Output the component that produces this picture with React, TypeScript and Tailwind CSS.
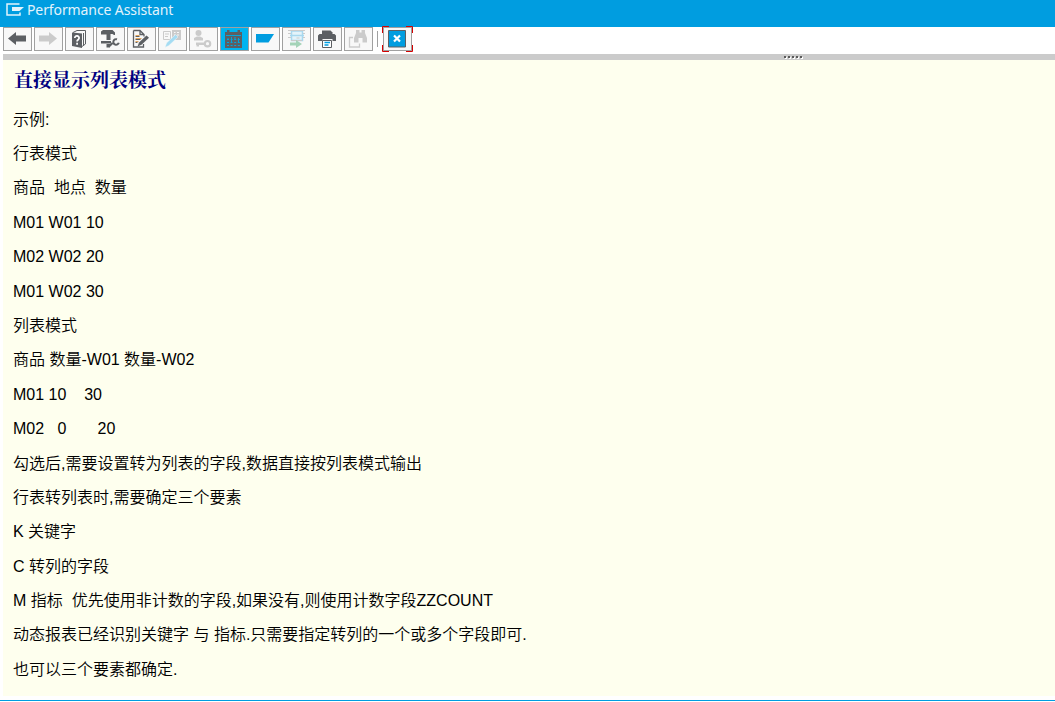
import React, { FC, ReactNode } from 'react'
import clsx from 'clsx'

const DARK = '#5c5f63'
const PALE = '#cbcbcb'

const ToolButton: FC<{ label: string; active?: boolean; children: ReactNode }> = ({
  label,
  active,
  children,
}) => (
  <button
    aria-label={label}
    className={clsx(
      'h-6 w-[29px] shrink-0 border border-[#a0a0a0]',
      active ? 'bg-[#00b4f0]' : 'bg-[#f8f8f8]'
    )}
  >
    <svg viewBox="1 1 27 22" width="27" height="22" className="block">
      {children}
    </svg>
  </button>
)

const TOOLS: { label: string; active?: boolean; icon: ReactNode }[] = [
  {
    label: 'Back',
    icon: <path d="M5 11.5 13 5v3.500h10v6H13V18z" fill={DARK} />,
  },
  {
    label: 'Forward',
    icon: <path d="M23 11.500 15 5v3.500H5v6h10V18z" fill={PALE} />,
  },
  {
    label: 'Application help',
    icon: (
      <>
        <path d="M8 5.500 12 3.500h8.500V17L17 19.500" fill="#f8f8f8" stroke={DARK} />
        <path d="M18.500 6v13" fill="none" stroke={DARK} />
        <path d="M7 5.500 17 6.500V21L7 19z" fill={DARK} />
        <path
          d="M9.800 11c0-3 4.600-2.500 4.300.2-.2 1.700-2 1.500-2 3.300M12.100 15.700v2"
          fill="none"
          stroke="#fff"
          strokeWidth="1.700"
        />
      </>
    ),
  },
  {
    label: 'Maintain documentation',
    icon: (
      <>
        <path d="M5 4.500 7 3h9.500l2.500 2.500V8h-1l-1.500-1H14.500v6h-4V7.500H5z" fill={DARK} />
        <path d="M5 14h10v2.500H5zM10.500 17H14v3.500h-3.500z" fill={DARK} />
        <path
          d="M21.500 12.500 19 14l.5 2 2.500.5"
          fill="none"
          stroke="#f8f8f8"
        />
        <path
          d="M21 12.300a2.800 2.800 0 1 0 1.800 3.500M16.500 16 13 19.500"
          fill="none"
          stroke={DARK}
          strokeWidth="2"
        />
      </>
    ),
  },
  {
    label: 'Create note',
    icon: (
      <>
        <path
          d="M6.500 3.500h6.500l4 4v2M6.500 3.500v16.500h10V17M13 3.500v4h4"
          fill="none"
          stroke={DARK}
          strokeWidth="1.300"
        />
        <path d="M8.500 8.500h4M8.500 11.500h6M8.500 14.500h3" stroke="#e5a65b" />
        <path d="M8.500 9.500h4M8.500 12.500h5M8.500 15.500h2" stroke={DARK} />
        <path d="m19.500 8.500 2.500 2.300-7.500 7-4 1.700 1.500-4z" fill={DARK} />
      </>
    ),
  },
  {
    label: 'Edit',
    icon: (
      <>
        <path d="M5.500 4.500h7v8h-7z" fill="none" stroke={PALE} />
        <path d="M14 3h9v10h-9z" fill={PALE} />
        <path d="M7 7h4M7 9.500h3" stroke={PALE} />
        <path d="M16 5.500h1.500M19 5.500h2M16 8h1M19 8h2" stroke="#f8f8f8" />
        <path d="m17.500 7.500 2.500 2.500-9 8.500-4 2 1.500-4.500z" fill="#a5dcf3" stroke="#f8f8f8" strokeWidth=".5" />
      </>
    ),
  },
  {
    label: 'User settings',
    icon: (
      <>
        <circle cx="9.500" cy="6" r="3" fill={PALE} />
        <path d="M5 13.500V11l3-1.500h3l3 1.500v2.500zM7 15.500h9V18H7zM7.500 17h2.500v2.500H7.500z" fill={PALE} />
        <circle cx="18.500" cy="16.700" r="2.700" fill="none" stroke={PALE} strokeWidth="2.200" />
      </>
    ),
  },
  {
    label: 'Calendar',
    active: true,
    icon: (
      <>
        <path d="M5 5h17v16H5zM7 3h2.500v3H7zM17.500 3H20v3h-2.500z" fill={DARK} />
        <path d="M6 8.500h15" stroke="#00a6df" />
        <path
          d="M7 12.500h13M7 15.500h13M7 18.500h13"
          stroke="#00a6df"
          strokeDasharray="2 1.600"
        />
        <path d="M8 11v2M11.500 10v5M15 10v2M18.500 11v5" stroke="#00a6df" />
      </>
    ),
  },
  {
    label: 'Flag',
    icon: <path d="M5 7h18l-5.500 8.500H5z" fill="#009de0" />,
  },
  {
    label: 'Export',
    icon: (
      <>
        <path d="M9.500 4h11v9.500h-11z" fill="#e4f3fa" stroke="#a8d8ef" strokeWidth="1.500" />
        <path d="M8 8.500h14" stroke="#a8d8ef" strokeWidth="1.500" />
        <path d="M6 3.500h17M6 6.500h3M6 10.500h3M21 6.500h2M21 10.500h2M9 13.500h11M14.500 11h3" stroke={PALE} />
        <path d="M8 15.500h6V13l6 4-6 4v-2.500H8z" fill="#a4d3b8" />
      </>
    ),
  },
  {
    label: 'Print',
    icon: (
      <>
        <path d="M9 3.500h8.500l2 2V8H9z" fill={DARK} />
        <path d="M5 8.500 6.500 7h15L23 8.500V14h-3.500v-2h-10v2H5z" fill={DARK} />
        <path d="M9.500 13.500h9v7h-9z" fill="#fff" stroke={DARK} />
        <path d="M11.500 15.500h5.500M11.500 18h4" stroke="#009de0" strokeWidth="1.300" />
      </>
    ),
  },
  {
    label: 'Find',
    icon: (
      <>
        <path
          d="M12 3h3.500v2.500h2V3H21v3l2 5v4.500h-4.500v-4.500h-4v4.500H10V11l2-5z"
          fill={PALE}
        />
        <path d="M9 10.500H5.500v9.500h10v-3.500" fill="none" stroke={PALE} strokeWidth="1.300" />
      </>
    ),
  },
]

const LINES = [
  '示例:',
  '行表模式',
  '商品  地点  数量',
  'M01 W01 10',
  'M02 W02 20',
  'M01 W02 30',
  '列表模式',
  '商品 数量-W01 数量-W02',
  'M01 10    30',
  'M02   0       20',
  '勾选后,需要设置转为列表的字段,数据直接按列表模式输出',
  '行表转列表时,需要确定三个要素',
  'K 关键字',
  'C 转列的字段',
  'M 指标  优先使用非计数的字段,如果没有,则使用计数字段ZZCOUNT',
  '动态报表已经识别关键字 与 指标.只需要指定转列的一个或多个字段即可.',
  '也可以三个要素都确定.',
]

const TitleBar = () => (
  <header className="flex h-[27px] shrink-0 items-start bg-[#009de0] pl-1.5 text-[#e2f3fc]">
    <svg width="19" height="20" viewBox="0 0 19 20" className="shrink-0">
      <path
        d="M13.500 4H1v11h13v-2.500"
        fill="none"
        stroke="currentColor"
        strokeWidth="1.500"
      />
      <path d="M6 7h12l-4.500 4H6z" fill="currentColor" />
    </svg>
    <h1 className="ml-0.5 whitespace-nowrap font-['Noto_Sans',sans-serif] text-[14px] leading-[20px] tracking-[-0.1px]">
      Performance Assistant
    </h1>
  </header>
)

const Toolbar = () => (
  <div className="flex h-[27px] shrink-0 gap-0.5 bg-white pl-[3px]">
    {TOOLS.map(({ label, active, icon }) => (
      <ToolButton key={label} label={label} active={active}>
        {icon}
      </ToolButton>
    ))}
    <span className="ml-0.5 mt-1 h-4 w-px bg-[#a0a0a0]" />
    <div className="relative ml-[3px] h-6">
      <ToolButton label="Close">
        <path d="M5.500 3.500h17v16.500h-17z" fill="#009de0" stroke={DARK} />
        <path d="m11 8.500 6 6m0-6-6 6" stroke="#fff" strokeWidth="2.200" />
      </ToolButton>
      <svg
        width="31"
        height="26"
        viewBox="0 0 31 26"
        className="absolute -left-px -top-px"
      >
        <path
          d="M.5 7V.5H7M24 .5h6.500V7M30.500 19v6.500H24M7 25.500H.5V19"
          fill="none"
          stroke="#d40000"
        />
      </svg>
    </div>
  </div>
)

const Splitter = () => (
  <div className="ml-[3px] flex h-1.5 shrink-0 bg-[#cbcbcb] pl-[781px] pt-0.5">
    <svg width="20" height="3" viewBox="0 0 20 3">
      {[0, 4, 8, 12, 16].map((x) => (
        <g key={x}>
          <rect x={x + 1} y="1" width="2" height="2" fill="#fff" />
          <rect x={x} width="2" height="2" fill="#5a5a5a" />
        </g>
      ))}
    </svg>
  </div>
)

const App = () => (
  <div className="flex h-[702px] w-[1055px] flex-col overflow-hidden bg-white">
    <TitleBar />
    <Toolbar />
    <Splitter />
    <main className="ml-[3px] h-[636px] shrink-0 bg-[#feffee] pl-2.5 font-['Liberation_Sans','Noto_Sans_CJK_SC',sans-serif] text-black">
      <h2 className="ml-px h-[42.6px] font-['Noto_Serif_CJK_SC','Noto_Sans_CJK_SC',serif] text-[19px] font-bold leading-[37px] text-[#000080]">
        直接显示列表模式
      </h2>
      {LINES.map((line, i) => (
        <p
          key={i}
          className="h-[34.4px] whitespace-pre text-[16px] font-[350] leading-[34.4px]"
        >
          {line}
        </p>
      ))}
    </main>
    <div className="mt-1 h-px shrink-0 bg-[#009de0]" />
  </div>
)

export default App
